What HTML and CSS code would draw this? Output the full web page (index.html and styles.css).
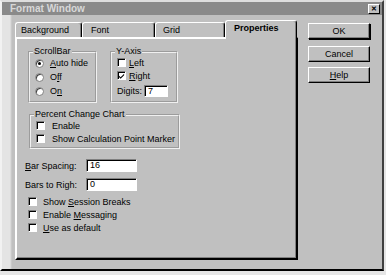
FILE: index.html
```html
<!DOCTYPE html>
<html lang="en">
<head>
  <meta charset="UTF-8">
  <title>Format Window</title>
  <link rel="stylesheet" href="styles.css">
</head>
<body>

  <div class="window">
    <!-- Title bar -->
    <div class="titlebar">
      <span class="title">Format Window</span>
      <span class="close">&#x2715;</span>
    </div>

    <div class="client">
      <!-- Tabbed property sheet -->
      <div class="sheet">
        <div class="tabs">
          <div class="tab tab-bg">Background</div>
          <div class="tab tab-font">Font</div>
          <div class="tab tab-grid">Grid</div>
          <div class="tab tab-props active">Properties</div>
        </div>

        <div class="panel">
          <div class="group-row">
            <fieldset class="group group-scroll">
              <legend>ScrollBar</legend>
              <div class="opt"><span class="radio on"></span><span><u>A</u>uto hide</span></div>
              <div class="opt"><span class="radio"></span><span>O<u>f</u>f</span></div>
              <div class="opt"><span class="radio"></span><span>O<u>n</u></span></div>
            </fieldset>

            <fieldset class="group group-axis">
              <legend>Y-Axis</legend>
              <div class="chk-row"><span class="check"></span><span><u>L</u>eft</span></div>
              <div class="chk-row"><span class="check checked"><svg viewBox="0 0 8 8" width="8" height="8"><path d="M1 3.5 L3 5.5 L7 1.5 L7 3 L3 7 L1 5 Z" fill="#000"/></svg></span><span><u>R</u>ight</span></div>
              <div class="digits-row"><span>Digits:</span><span class="field field-digits">7</span></div>
            </fieldset>
          </div>

          <fieldset class="group group-pct">
            <legend>Percent Change Chart</legend>
            <div class="chk-row"><span class="check"></span><span>Enable</span></div>
            <div class="chk-row"><span class="check"></span><span>Show Calculation Point Marker</span></div>
          </fieldset>

          <div class="field-row field-row-first"><span class="field-label"><u>B</u>ar Spacing:</span><span class="field">16</span></div>
          <div class="field-row"><span class="field-label">Bars to Righ:</span><span class="field">0</span></div>

          <div class="options">
            <div class="chk-row"><span class="check"></span><span>Show <u>S</u>ession Breaks</span></div>
            <div class="chk-row"><span class="check"></span><span>Enable <u>M</u>essaging</span></div>
            <div class="chk-row"><span class="check"></span><span><u>U</u>se as default</span></div>
          </div>
        </div>
      </div>

      <!-- Dialog buttons -->
      <div class="buttons">
        <button class="btn btn-default">OK</button>
        <button class="btn btn-cancel">Cancel</button>
        <button class="btn"><u>H</u>elp</button>
      </div>
    </div>
  </div>

</body>
</html>
```

FILE: styles.css
```css
/* Global styles */
* {
  box-sizing: border-box;
}

body {
  margin: 0;
  width: 386px;
  height: 275px;
  overflow: hidden;
  background-color: #e6e6e6;
  font-family: "Liberation Sans", Arial, sans-serif;
  font-size: 9px;
  color: #000;
}

u {
  text-decoration: underline;
}

/* Window frame */
.window {
  width: 384px;
  height: 271px;
  display: flex;
  flex-direction: column;
  background-color: #c0c0c0;
  border-top: 2px solid #dedede;
  border-left: 2px solid #f2f2f2;
  border-right: 2px solid #404040;
  border-bottom: 2px solid #000;
}

/* Title bar */
.titlebar {
  height: 13px;
  display: flex;
  align-items: center;
  justify-content: space-between;
  padding: 0 2px 0 8px;
  background-color: #8a8a8a;
}

.title {
  color: #d8d8d8;
  font-weight: bold;
  font-size: 10px;
}

.close {
  width: 12px;
  height: 10px;
  display: flex;
  align-items: center;
  justify-content: center;
  background-color: #c0c0c0;
  border: 1px solid;
  border-color: #fff #000 #000 #fff;
  font-size: 7px;
  font-weight: bold;
  line-height: 1;
}

/* Client area */
.client {
  flex: 1;
  display: flex;
  padding: 5px 0 0 13px;
  background: linear-gradient(to right, #e4e4e4 0, #e4e4e4 8px, #c0c0c0 10px);
}

.sheet {
  width: 283px;
  display: flex;
  flex-direction: column;
}

/* Tabs */
.tabs {
  height: 17px;
  display: flex;
  align-items: flex-end;
}

.tab {
  height: 15px;
  padding: 1px 0 0 5px;
  border-top: 1px solid #fff;
  border-left: 1px solid #fff;
  border-right: 1px solid #000;
  border-radius: 3px 3px 0 0;
  box-shadow: inset -1px 0 0 #808080;
  line-height: 12px;
}

.tab-bg {
  width: 67px;
}

.tab-font {
  width: 73px;
  padding-left: 8px;
}

.tab-grid {
  width: 70px;
  padding-left: 7px;
}

.tab-props {
  width: 72px;
}

.tab.active {
  position: relative;
  z-index: 2;
  height: 19px;
  margin-bottom: -2px;
  padding-left: 8px;
  background-color: #c0c0c0;
  font-weight: bold;
}

/* Tab panel */
.panel {
  height: 223px;
  display: flex;
  flex-direction: column;
  align-items: flex-start;
  padding: 8px 0 0 8px;
  border: 2px solid;
  border-color: #fff #000 #000 #fff;
  box-shadow: inset -1px -1px 0 #808080;
}

/* Group boxes */
.group-row {
  display: flex;
  gap: 13px;
  margin-left: 3px;
}

.group {
  margin: 0;
  padding: 0 4px 5px 5px;
  min-width: 0;
  border: 2px groove #f0f0f0;
}

.group legend {
  padding: 0 1px;
  margin-left: -2px;
  line-height: 9px;
}

.group-scroll {
  width: 69px;
  height: 56px;
}

.group-axis {
  width: 68px;
  height: 56px;
}

.group-pct {
  width: 151px;
  height: 39px;
  margin: 7px 0 0 4px;
}

.opt,
.chk-row {
  display: flex;
  align-items: center;
  gap: 6px;
  white-space: nowrap;
}

.opt {
  height: 14px;
}

.chk-row {
  height: 13px;
}

.group-axis .chk-row {
  gap: 3px;
}

.group-pct .chk-row {
  gap: 7px;
}

/* Radio buttons */
.radio {
  position: relative;
  width: 9px;
  height: 9px;
  flex: none;
  border-radius: 50%;
  background-color: #fff;
  border: 1px solid #808080;
  box-shadow: inset 1px 1px 0 #404040;
}

.radio.on::after {
  content: "";
  position: absolute;
  left: 2px;
  top: 2px;
  width: 3px;
  height: 3px;
  border-radius: 50%;
  background-color: #000;
}

/* Check boxes */
.check {
  width: 9px;
  height: 9px;
  flex: none;
  display: flex;
  align-items: center;
  justify-content: center;
  background-color: #fff;
  border: 1px solid;
  border-color: #808080 #fff #fff #808080;
  box-shadow: inset 1px 1px 0 #000;
}

.check svg {
  display: block;
}

/* Text fields */
.field {
  width: 51px;
  height: 13px;
  padding-left: 3px;
  background-color: #fff;
  border: 1px solid;
  border-color: #808080 #fff #fff #808080;
  box-shadow: inset 1px 1px 0 #000;
  line-height: 11px;
}

.digits-row {
  display: flex;
  align-items: center;
  gap: 2px;
  margin-top: 3px;
}

.field-digits {
  width: 24px;
  height: 12px;
}

.field-row {
  display: flex;
  align-items: center;
  margin-top: 6px;
}

.field-row-first {
  margin-top: 10px;
}

.field-label {
  width: 61px;
}

.options {
  margin: 4px 0 0 3px;
}

/* Dialog buttons */
.buttons {
  display: flex;
  flex-direction: column;
  margin: 3px 0 0 10px;
}

.btn {
  width: 62px;
  height: 16px;
  padding: 0;
  font-family: inherit;
  font-size: 9px;
  color: #000;
  background-color: #c0c0c0;
  border: 1px solid;
  border-color: #fff #000 #000 #fff;
  box-shadow: inset -1px -1px 0 #808080;
}

.btn-default {
  margin-bottom: 7px;
  box-shadow: inset -1px -1px 0 #808080, 1px 1px 0 #000;
}

.btn-cancel {
  margin-bottom: 5px;
}
```
